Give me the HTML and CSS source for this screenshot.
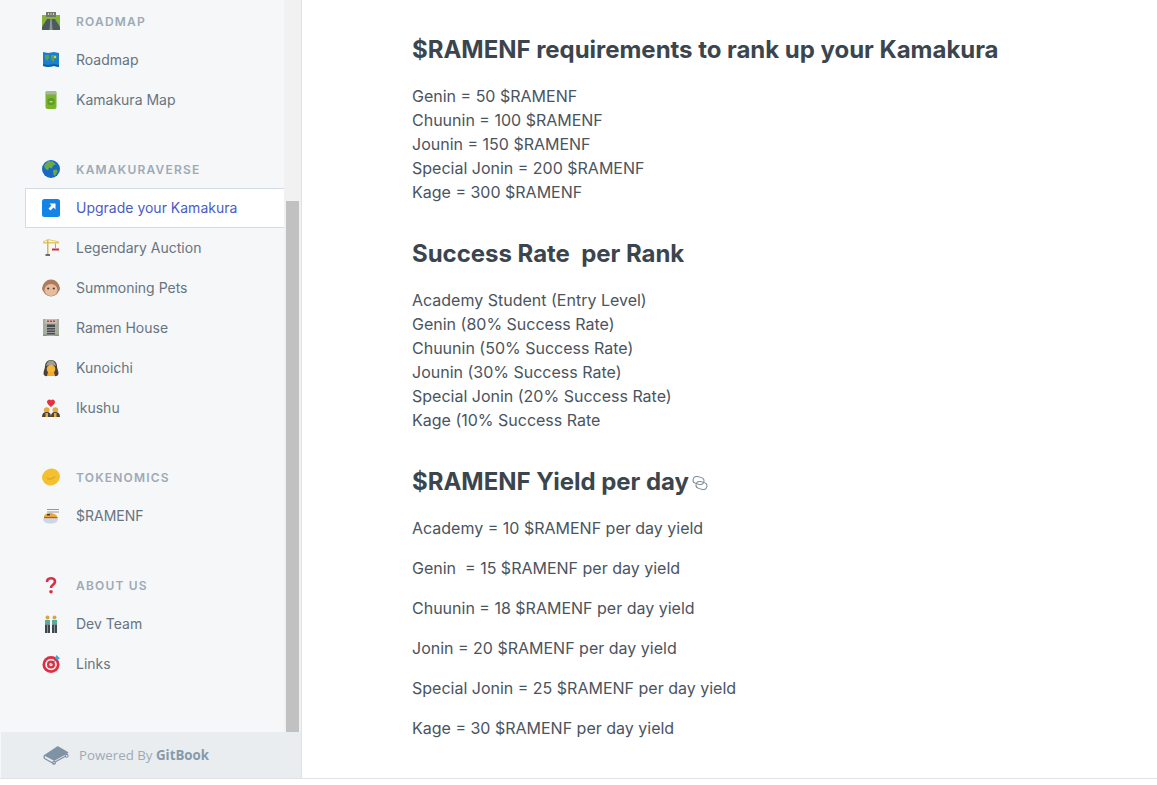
FILE: index.html
```html
<!DOCTYPE html>
<html lang="en">
<head>
<meta charset="utf-8">
<title>Kamakura</title>
<link rel="stylesheet" href="styles.css">
</head>
<body>
<div class="app">
  <aside class="sidebar">
    <div class="side-scroll">
      <nav class="nav">
        <div class="group">
          <div class="head">
            <svg class="ico" viewBox="0 0 18 18"><path fill="#86b33c" d="M0 3h18v12H0z"/><path fill="#6f7b68" d="M4 0h10v5H4z"/><path fill="#4d5a5e" d="M0 18v-3l5-8h8l5 8v3z"/><path fill="#8b9698" d="M7.500 18l.8-11h1.400l.8 11z"/><path fill="#cfd3b8" d="M6 1h1v2H6zM8.500 1h1v2h-1zM11 1h1v2h-1z"/></svg>
            <span>ROADMAP</span>
          </div>
          <a class="item"><svg class="ico" viewBox="0 0 18 18"><path fill="#1a7fd0" d="M1 1l5 1 6-1 5 1v14l-5-1-6 1-5-1z"/><path fill="#5aa24a" d="M3 4h4v3l-2 3-2-3zM9 4h5l1 3-3 1v3l-2-1-1-3z"/><path fill="#d8c66a" d="M12 5h2v2h-2z"/><path fill="#0e5da8" d="M1 13l5 1 6-1 5 1v2l-5-1-6 1-5-1z"/></svg><span>Roadmap</span></a>
          <a class="item"><svg class="ico" viewBox="0 0 18 18"><rect x="3.500" y="0" width="11" height="18" rx="2" fill="#79b52c"/><rect x="3.500" y="0" width="11" height="3.500" rx="1.700" fill="#a9b8a0"/><rect x="5.500" y="7" width="7" height="7" rx="2.500" fill="#5f9a22"/><path fill="#bcdc80" d="M7.500 10h3v1.500h-3z"/></svg><span>Kamakura Map</span></a>
        </div>
        <div class="group">
          <div class="head">
            <svg class="ico" viewBox="0 0 18 18"><circle cx="9" cy="9" r="9" fill="#1769c2"/><path fill="#6bab45" d="M6 1l5 .5 3 3-3 1-1 3-3-1-1 3-3-2-1-3zM11 10l4-.5.5 2.500-2.500 4-1.500-1z"/></svg>
            <span>KAMAKURAVERSE</span>
          </div>
          <a class="item active"><svg class="ico" viewBox="0 0 18 18"><rect width="18" height="18" rx="2.500" fill="#1384e6"/><path fill="#fff" d="M7.500 4.500h6v6l-2-2-3 3-2-2 3-3z"/></svg><span>Upgrade your Kamakura</span></a>
          <a class="item"><svg class="ico" viewBox="0 0 18 18"><path fill="#e9c75a" d="M1 3h16v1.500H1z"/><path fill="#d9b84c" d="M5 1h1.500v14H5z"/><path fill="none" stroke="#e3c96c" d="M1 3l5-2.500L17 3"/><path fill="#6b6b6b" d="M3.500 15h4.500v2H3.500z"/><path fill="#8f8f8f" d="M13 4.500h.8V9H13z"/><path fill="#cf2f3f" d="M10 9.500h7v2h-7z"/></svg><span>Legendary Auction</span></a>
          <a class="item"><svg class="ico" viewBox="0 0 18 18"><circle cx="2.500" cy="9.500" r="2.500" fill="#b98a6c"/><circle cx="15.500" cy="9.500" r="2.500" fill="#b98a6c"/><circle cx="9" cy="9" r="8.500" fill="#ab7c60"/><ellipse cx="9" cy="11" rx="6.500" ry="6" fill="#e5bd9c"/><circle cx="6.200" cy="9.500" r="1.100" fill="#4b3a30"/><circle cx="11.800" cy="9.500" r="1.100" fill="#4b3a30"/></svg><span>Summoning Pets</span></a>
          <a class="item"><svg class="ico" viewBox="0 0 18 18"><path fill="#a9aaa0" d="M1 0h16v17H1z"/><path fill="#c5bdb2" d="M3 0h12v4.500H3z"/><path fill="#d0393f" d="M5 1.500h2V3H5zM8 1.500h2V3H8zM11 1.500h2V3h-2z"/><path fill="#4b4c50" d="M5 5.500h8v10H5z"/><path fill="#9da0a0" d="M5 8h8v1H5zM5 10.500h8v1H5zM5 13h8v1H5z"/><path fill="#7f9a78" d="M1 15.500h4V17H1zM13 15.500h4V17h-4z"/></svg><span>Ramen House</span></a>
          <a class="item"><svg class="ico" viewBox="0 0 18 18"><path fill="#4a4238" d="M9 1c4 0 6 3 6 6.500 0 2 1.500 4 1.500 7 0 2-2 3-4 2.500H5.500c-2 .5-4-.5-4-2.500 0-3 1.500-5 1.500-7C3 4 5 1 9 1z"/><path fill="#a09c96" d="M4 7c.5-3.500 2.500-5.500 5-5.500S13.500 3.500 14 7c-3-1.500-7-1.500-10 0z"/><circle cx="9" cy="10" r="4.300" fill="#f5b53a"/><path fill="#f2a92c" d="M6 13h6l1 4H5z"/></svg><span>Kunoichi</span></a>
          <a class="item"><svg class="ico" viewBox="0 0 18 18"><path fill="#e5303e" d="M9 8C7 6 5 5 5 3 5 1.600 6.300.5 7.500.5 8.200.5 8.700 1 9 1.600c.3-.6.800-1.100 1.500-1.100C11.700.5 13 1.600 13 3c0 2-2 3-4 5z"/><circle cx="4.700" cy="11" r="2.800" fill="#e9a93a"/><circle cx="13.300" cy="11" r="2.800" fill="#e9a93a"/><path fill="#4f4336" d="M0 18c0-3.500 1.500-5 4.700-5s4.300 1.500 4.300 5zM9 18c0-3.500 1.100-5 4.300-5S18 14.500 18 18z"/><path fill="#e9a93a" d="M3.500 14h2.500v4H3.500zM12 14h2.500v4H12z"/></svg><span>Ikushu</span></a>
        </div>
        <div class="group">
          <div class="head">
            <svg class="ico" viewBox="0 0 18 18"><ellipse cx="9" cy="9" rx="9" ry="8.300" fill="#f4c02f" transform="rotate(-20 9 9)"/><path fill="none" stroke="#dfa522" stroke-width="1.200" d="M5 10c2 1.500 5 1.500 8-1.500"/></svg>
            <span>TOKENOMICS</span>
          </div>
          <a class="item"><svg class="ico" viewBox="0 0 18 18"><path fill="none" stroke="#9a9a9a" stroke-width="1.200" d="M5 2.500h12M5 5h12"/><path fill="#e6a93c" d="M2 9c2-3 6-4 9-2.500 2 .5 3 1.500 4 2.500v2H2z"/><path fill="#d9482f" d="M2 10h13.500v1.500H2z"/><path fill="#3b3f45" d="M5 7h3v1.500H5z"/><path fill="#c9d8e6" d="M1 11.500h15c0 3-2.500 5-7.500 5S1 14.500 1 11.500z"/></svg><span>$RAMENF</span></a>
        </div>
        <div class="group">
          <div class="head">
            <svg class="ico" viewBox="0 0 18 18"><path fill="none" stroke="#dd2e44" stroke-width="2.600" d="M5 6c0-5 8-5 8-.5 0 3.500-4 3-4 6.500"/><circle cx="9" cy="15.800" r="1.800" fill="#dd2e44"/></svg>
            <span>ABOUT US</span>
          </div>
          <a class="item"><svg class="ico" viewBox="0 0 18 18"><circle cx="5.500" cy="2.500" r="2" fill="#d2a74c"/><circle cx="12.500" cy="2.500" r="2" fill="#d2a74c"/><path fill="#56ab9a" d="M3 5h5v4.500H3zM10 5h5v4.500h-5z"/><path fill="#3f4650" d="M3 9.500h5V18H3zM10 9.500h5V18h-5z"/><path fill="#8b929a" d="M5 10h1v8H5zM12 10h1v8h-1z"/></svg><span>Dev Team</span></a>
          <a class="item"><svg class="ico" viewBox="0 0 18 18"><circle cx="9" cy="9.500" r="8.500" fill="#dd2e44"/><circle cx="9" cy="9.500" r="5.800" fill="#f4f0ee"/><circle cx="9" cy="9.500" r="4" fill="#dd2e44"/><circle cx="9" cy="9.500" r="1.700" fill="#f4f0ee"/><path stroke="#55595f" stroke-width="1" d="M9 9.500l5-5"/><path fill="#3ba5de" d="M13 3l1.500-3L18 3.500 15 5z"/></svg><span>Links</span></a>
        </div>
      </nav>
      <div class="track"><div class="thumb"></div></div>
    </div>
    <div class="powered">
      <svg class="book" viewBox="0 0 26 20"><path fill="#7f93a5" d="M2 9.500L14 1.500c.5-.3 1-.3 1.500 0L25 7c.5.400.400 1-.1 1.300L12 15.500c-.5.300-1 .3-1.500 0L2 11c-.5-.4-.5-1 0-1.500z"/><path fill="none" stroke="#7f93a5" stroke-width="1.300" d="M2 10c-1.500 1.500-1 3 0 3.800l8 4.500c.8.400 1.500.3 2-.2M12 17l11-6"/><circle cx="11" cy="17.800" r="1.400" fill="none" stroke="#7f93a5" stroke-width="1.100"/><circle cx="23.700" cy="10.800" r="1.400" fill="none" stroke="#7f93a5" stroke-width="1.100"/></svg>
      <span class="pw-text">Powered By <strong>GitBook</strong></span>
    </div>
  </aside>
  <main class="main">
    <h2>$RAMENF requirements to rank up your Kamakura</h2>
    <p>Genin = 50 $RAMENF<br>Chuunin = 100 $RAMENF<br>Jounin = 150 $RAMENF<br>Special Jonin = 200 $RAMENF<br>Kage = 300 $RAMENF</p>
    <h2>Success Rate&nbsp; per Rank</h2>
    <p>Academy Student (Entry Level)<br>Genin (80% Success Rate)<br>Chuunin (50% Success Rate)<br>Jounin (30% Success Rate)<br>Special Jonin (20% Success Rate)<br>Kage (10% Success Rate</p>
    <h2 class="with-link">$RAMENF Yield per day<svg class="link" viewBox="0 0 16 16"><g fill="none" stroke="#7f8b96" stroke-width="1"><rect x="1" y="2" width="11" height="7" rx="3.500" transform="rotate(15 6.500 5.500)"/><rect x="4" y="7" width="11" height="7" rx="3.500" transform="rotate(15 9.500 10.500)"/></g></svg></h2>
    <p class="gap">Academy = 10 $RAMENF per day yield</p>
    <p class="gap">Genin&nbsp; = 15 $RAMENF per day yield</p>
    <p class="gap">Chuunin = 18 $RAMENF per day yield</p>
    <p class="gap">Jonin = 20 $RAMENF per day yield</p>
    <p class="gap">Special Jonin = 25 $RAMENF per day yield</p>
    <p class="gap">Kage = 30 $RAMENF per day yield</p>
  </main>
</div>
</body>
</html>
```
FILE: styles.css
```css
* { box-sizing: border-box; }
html, body { margin: 0; height: 100%; overflow: hidden; background: #fff; }
body { font-family: Inter, "Noto Sans", sans-serif; color: #3b454e; }
.app { display: flex; height: 779px; border-bottom: 1px solid #dfe3e7; }
.sidebar { width: 302px; flex: none; display: flex; flex-direction: column; background: #f5f7f9; border-right: 1px solid #dfe3e7; }
.side-scroll { flex: 1; display: flex; min-height: 0; }
.nav { flex: 1; padding: 2px 0 0 25px; min-width: 0; }
.group { margin-bottom: 30px; }
.head { height: 38px; display: flex; align-items: center; gap: 16px; padding-left: 17px; font-size: 12px; font-weight: 600; letter-spacing: 1.2px; color: #9daab6; }
.item { height: 40px; display: flex; align-items: center; gap: 16px; padding-left: 17px; font-size: 14px; color: #68747f; }
.item span { padding-bottom: 2px; }
.item.active { background: #fff; color: #4a5cc4; border: 1px solid #d3dce4; border-right: 0; padding-left: 16px; }
.ico { width: 18px; height: 18px; flex: none; }
.track { width: 17px; flex: none; background: #f1f1f1; padding: 201px 2px 0; }
.thumb { height: 531px; background: #c1c1c1; }
.powered { height: 46px; flex: none; display: flex; align-items: center; gap: 10px; padding-left: 43px; background: #e9edf0; margin-left: 1px; }
.powered .book { margin-left: -1px; }
.book { width: 26px; height: 20px; flex: none; }
.pw-text { font-family: "Open Sans", sans-serif; font-size: 13.300px; color: #9daab6; }
.pw-text strong { font-weight: 700; color: #869aab; }
.main { flex: 1; padding: 32px 0 0 110px; min-width: 0; }
h2 { margin: 0 0 16px; font-size: 24px; font-weight: 700; line-height: 36px; letter-spacing: -0.03px; }
p { margin: 0 0 32px; font-size: 16px; line-height: 24px; color: #4a545e; }
p.gap { margin-bottom: 16px; }
.with-link { display: flex; align-items: center; }
.link { width: 16px; height: 16px; margin-left: 3px; margin-top: 2px; flex: none; }
```
